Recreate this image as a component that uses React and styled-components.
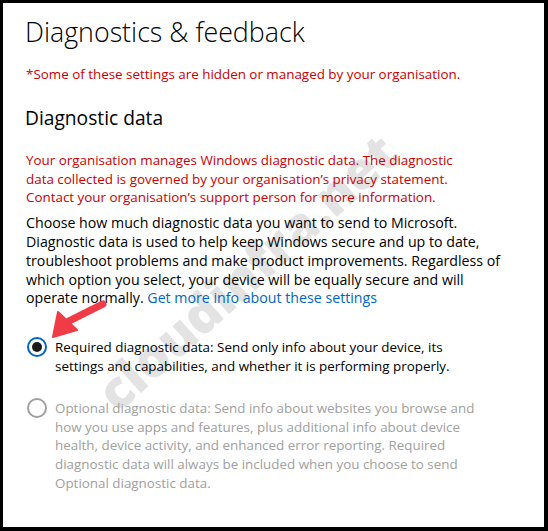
import React from "react";
import styled, { createGlobalStyle } from "styled-components";

const Global = createGlobalStyle`
  html, body { margin: 0; padding: 0; background: #fff; }
  body { font-family: "Open Sans", "Noto Sans", sans-serif; }
`;

const Frame = styled.div`
  position: relative;
  box-sizing: border-box;
  width: 548px;
  height: 531px;
  border-style: solid;
  border-color: #000;
  border-width: 3px 4px 4px 3px;
  background: #fff;
  overflow: hidden;
`;

const Content = styled.div`
  position: relative;
  z-index: 1;
  padding: 11px 0 0 22px;
  display: flex;
  flex-direction: column;
  color: #000;
`;

const Title = styled.h1`
  margin: 0;
  font-size: 26.8px;
  font-weight: 300;
  line-height: 36px;
`;

const Text = styled.p`
  margin: ${(p) => p.$mt || 0}px 0 0 ${(p) => p.$ml || 0}px;
  font-size: ${(p) => p.$size || 13.4}px;
  line-height: 18.8px;
  white-space: nowrap;
  color: ${(p) => (p.$tone === "red" ? "#c80000" : p.$tone === "gray" ? "#a0a0a0" : "#000")};
`;

const Heading = styled.h2`
  margin: 21px 0 0 0;
  font-size: 19.2px;
  font-weight: 400;
  line-height: 26px;
`;

const Link = styled.a`
  color: #0067c0;
  text-decoration: none;
`;

const Option = styled.div`
  display: flex;
  align-items: flex-start;
  gap: 8px;
  margin-top: ${(p) => p.$mt}px;
`;

const Radio = styled.span`
  box-sizing: border-box;
  flex: none;
  width: 20px;
  height: 20px;
  margin: -1px 0 0 2px;
  border-radius: 50%;
  border: 2px solid ${(p) => (p.$on ? "#0067c0" : "#a0a0a0")};
  display: flex;
  align-items: center;
  justify-content: center;
  &::after {
    content: "";
    display: ${(p) => (p.$on ? "block" : "none")};
    width: 10px;
    height: 10px;
    border-radius: 50%;
    background: #1a1a1a;
  }
`;

const Watermark = styled.div`
  position: absolute;
  z-index: 0;
  left: 243px;
  top: 268px;
  transform: translate(-50%, -50%) rotate(-42deg);
  font-family: "Open Sans", sans-serif;
  font-weight: 800;
  font-size: 52px;
  color: #e3e3e3;
  white-space: nowrap;
  pointer-events: none;
`;

const Arrow = styled.svg`
  position: absolute;
  z-index: 2;
  left: 42px;
  top: 289px;
`;

export default function App() {
  return (
    <>
      <Global />
      <Frame>
        <Watermark>cloudinfra.net</Watermark>
        <Content>
          <Title>Diagnostics &amp; feedback</Title>
          <Text $tone="red" $mt={15} $ml={1}>
            *Some of these settings are hidden or managed by your organisation.
          </Text>
          <Heading>Diagnostic data</Heading>
          <Text $tone="red" $mt={20} $ml={1}>
            Your organisation manages Windows diagnostic data. The diagnostic
            <br />
            data collected is governed by your organisation’s privacy statement.
            <br />
            Contact your organisation’s support person for more information.
          </Text>
          <Text $mt={7} $ml={1} $size={14.2}>
            Choose how much diagnostic data you want to send to Microsoft.
            <br />
            Diagnostic data is used to help keep Windows secure and up to date,
            <br />
            troubleshoot problems and make product improvements. Regardless of
            <br />
            which option you select, your device will be equally secure and will
            <br />
            operate normally. <Link href="#">Get more info about these settings</Link>
          </Text>
          <Option $mt={30}>
            <Radio $on />
            <Text>
              Required diagnostic data: Send only info about your device, its
              <br />
              settings and capabilities, and whether it is performing properly.
            </Text>
          </Option>
          <Option $mt={23}>
            <Radio />
            <Text $tone="gray">
              Optional diagnostic data: Send info about websites you browse and
              <br />
              how you use apps and features, plus additional info about device
              <br />
              health, device activity, and enhanced error reporting. Required
              <br />
              diagnostic data will always be included when you choose to send
              <br />
              Optional diagnostic data.
            </Text>
          </Option>
        </Content>
        <Arrow width="70" height="52" viewBox="0 0 70 52">
          <line x1="58" y1="12" x2="24" y2="29" stroke="#f03c46" strokeWidth="7" strokeLinecap="round" />
          <polygon points="8,45 13,20 32,38" fill="#f03c46" stroke="#f03c46" strokeWidth="2" strokeLinejoin="round" />
        </Arrow>
      </Frame>
    </>
  );
}
